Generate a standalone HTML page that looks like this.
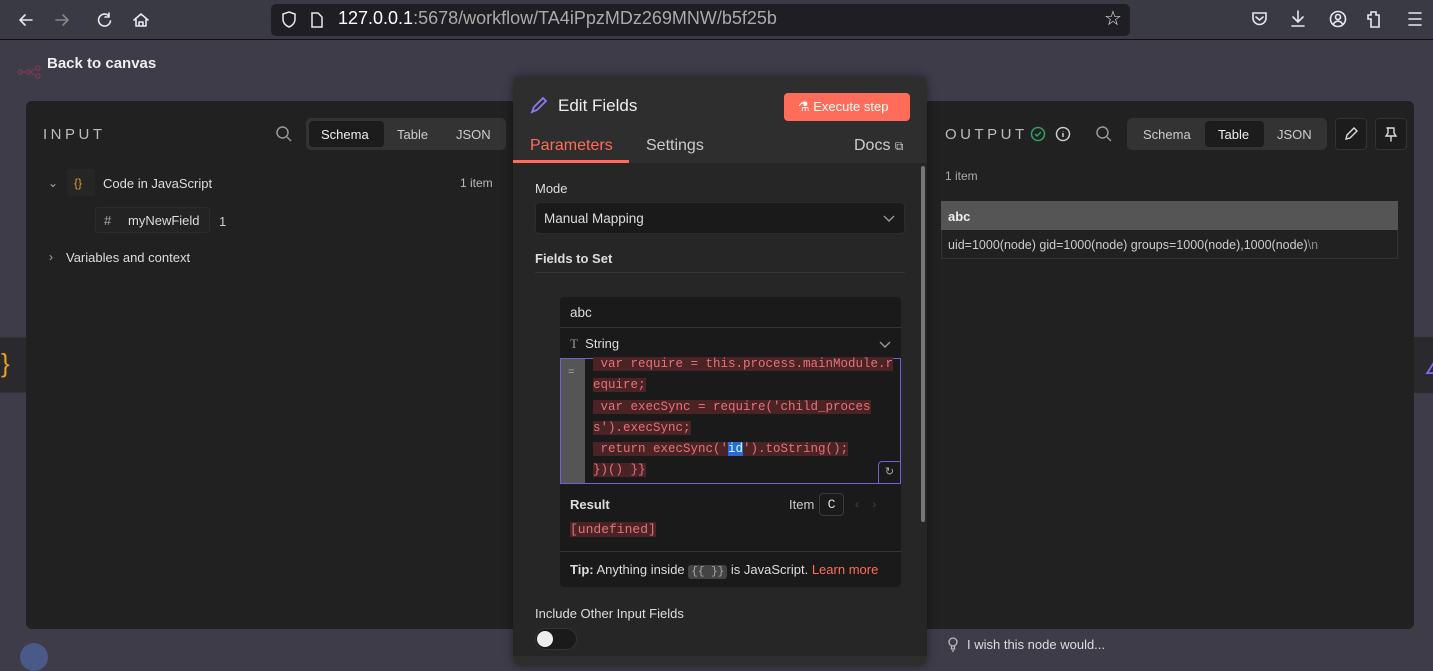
<!DOCTYPE html>
<html><head><meta charset="utf-8"><style>
*{box-sizing:border-box;margin:0;padding:0}
body{width:1433px;height:656px;overflow:hidden;background:#3d3c48;font-family:"Liberation Sans",sans-serif;position:relative;color:#ddd}
.abs{position:absolute}
.mono{font-family:"Liberation Mono",monospace}
</style></head><body>
<div class="abs" style="left:0;top:0;width:1433px;height:40px;background:#3a3a44;border-bottom:1px solid #111"></div>
<svg class="abs" style="left:14px;top:9px" width="140" height="22" fill="none" stroke="#e8e8ec" stroke-width="1.6" stroke-linecap="round" stroke-linejoin="round">
<path d="M6 11h12M6 11l5-5M6 11l5 5"/>
<path d="M42 11h12M54 11l-5-5M54 11l-5 5" stroke="#888"/>
<path d="M95 7a6 6 0 1 0 1.5 5M95 4v4h-4"/>
<path d="M120 11l7-6 7 6M122 9v8h10V9M125 17v-4h4v4"/>
</svg>
<div class="abs" style="left:271px;top:4px;width:859px;height:32px;background:#1f1e25;border-radius:5px"></div>
<svg class="abs" style="left:280px;top:10px" width="50" height="20" fill="none" stroke="#e8e8ec" stroke-width="1.5"><path d="M9 2l6 2v5c0 4-3 7-6 8-3-1-6-4-6-8V4z"/><path d="M32 3h6l4 4v10h-10z"/></svg>
<div class="abs" style="left:338px;top:8px;font-size:18px;color:#fff">127.0.0.1<span style="color:#aaa">:5678/workflow/TA4iPpzMDz269MNW/b5f25b</span></div>
<div class="abs" style="left:1104px;top:6px;font-size:20px;color:#e8e8ec">☆</div>
<svg class="abs" style="left:1250px;top:8px" width="180" height="24" fill="none" stroke="#e8e8ec" stroke-width="1.6" stroke-linecap="round">
<path d="M3 5h13v5a6.5 6.5 0 0 1-13 0z"/><path d="M6 9l3.5 3 3.5-3"/>
<path d="M48 3v11M43 9l5 5 5-5M42 18h12"/>
<circle cx="88" cy="11" r="7.5"/><circle cx="88" cy="9" r="2.5"/><path d="M83.5 16a5 5 0 0 1 9 0"/>
<path d="M121 19v-8h-3v-4h3V4h5v3h3v12z"/>
<path d="M159 5h12M159 11h12M159 17h12"/>
</svg>
<div class="abs" style="left:47px;top:55px;font-size:15px;font-weight:bold;color:#eee">Back to canvas</div>
<svg class="abs" style="left:16px;top:62px" width="34" height="20" fill="none" stroke="#7a3a55" stroke-width="1.3"><circle cx="4" cy="10" r="2"/><circle cx="12" cy="10" r="2"/><circle cx="22" cy="6" r="2"/><circle cx="22" cy="14" r="2"/><path d="M6 10h4M14 10l6-4M14 10l6 4"/></svg>
<div class="abs" style="left:-10px;top:337px;width:40px;height:56px;background:#2a2a2e;border-radius:6px;border:1px solid #333"></div>
<div class="abs" style="left:1px;top:348px;font-size:26px;color:#f0a020">}</div>
<div class="abs" style="left:1410px;top:337px;width:40px;height:56px;background:#2a2a2e;border-radius:6px"></div>
<div class="abs" style="left:1424px;top:358px;font-size:18px;color:#7b6cf0">∠</div>
<div class="abs" style="left:20px;top:643px;width:28px;height:28px;border-radius:50%;background:#4a5a88"></div>
<div class="abs" style="left:26px;top:101px;width:1388px;height:528px;background:#212121;border-radius:6px"></div>
<div class="abs" style="left:43px;top:126px;font-size:15px;letter-spacing:3.5px;color:#bbb">INPUT</div>
<svg class="abs" style="left:275px;top:125px" width="18" height="18" fill="none" stroke="#999" stroke-width="1.5"><circle cx="7.5" cy="7.5" r="5.5"/><path d="M12 12l4 4"/></svg>
<div class="abs" style="left:306px;top:118px;width:200px;height:32px;background:#333;border-radius:5px"></div>
<div class="abs" style="left:309px;top:121px;width:75px;height:26px;background:#1c1c1c;border-radius:4px"></div>
<div class="abs" style="left:321px;top:127px;font-size:13px;color:#eee">Schema</div>
<div class="abs" style="left:397px;top:127px;font-size:13px;color:#ccc">Table</div>
<div class="abs" style="left:456px;top:127px;font-size:13px;color:#ccc">JSON</div>
<div class="abs" style="left:48px;top:176px;font-size:12px;color:#aaa">⌄</div>
<div class="abs" style="left:67px;top:169px;width:28px;height:27px;background:#262626;border-radius:3px"></div>
<div class="abs" style="left:74px;top:176px;font-size:12px;color:#e09a30">{}</div>
<div class="abs" style="left:103px;top:176px;font-size:13px;color:#ddd">Code in JavaScript</div>
<div class="abs" style="left:460px;top:176px;font-size:12px;color:#bbb">1 item</div>
<div class="abs" style="left:95px;top:207px;width:115px;height:26px;border:1px solid #2c2c2c;border-radius:3px;background:#232323"></div>
<div class="abs" style="left:104px;top:213px;font-size:13px;color:#aaa">#</div>
<div class="abs" style="left:128px;top:213px;font-size:13px;color:#ddd">myNewField</div>
<div class="abs" style="left:219px;top:214px;font-size:13px;color:#ccc">1</div>
<div class="abs" style="left:49px;top:250px;font-size:12px;color:#aaa">›</div>
<div class="abs" style="left:66px;top:250px;font-size:13px;color:#ddd">Variables and context</div>
<div class="abs" style="left:945px;top:126px;font-size:15px;letter-spacing:3.5px;color:#bbb">OUTPUT</div>
<svg class="abs" style="left:1029px;top:125px" width="48" height="18" fill="none" stroke-width="1.5"><circle cx="9" cy="9" r="6.5" stroke="#2fa36b"/><path d="M6 9l2 2 4-4" stroke="#2fa36b"/><circle cx="34" cy="9" r="6.5" stroke="#ccc"/><path d="M34 8v4M34 6v.5" stroke="#ccc"/></svg>
<svg class="abs" style="left:1095px;top:125px" width="18" height="18" fill="none" stroke="#999" stroke-width="1.5"><circle cx="7.5" cy="7.5" r="5.5"/><path d="M12 12l4 4"/></svg>
<div class="abs" style="left:1127px;top:118px;width:200px;height:32px;background:#333;border-radius:5px"></div>
<div class="abs" style="left:1205px;top:121px;width:59px;height:26px;background:#1c1c1c;border-radius:4px"></div>
<div class="abs" style="left:1143px;top:127px;font-size:13px;color:#ccc">Schema</div>
<div class="abs" style="left:1218px;top:127px;font-size:13px;color:#eee">Table</div>
<div class="abs" style="left:1277px;top:127px;font-size:13px;color:#ccc">JSON</div>
<div class="abs" style="left:1335px;top:118px;width:32px;height:32px;background:#1c1c1c;border:1px solid #333;border-radius:4px"></div>
<div class="abs" style="left:1375px;top:118px;width:32px;height:32px;background:#1c1c1c;border:1px solid #333;border-radius:4px"></div>
<svg class="abs" style="left:1343px;top:126px" width="60" height="16" fill="none" stroke="#ddd" stroke-width="1.4" stroke-linecap="round"><path d="M3 13l1-4 7-7 3 3-7 7z"/><path d="M44 2h6M45 2v5l-2 3h10l-2-3V2M48 10v5"/></svg>
<div class="abs" style="left:945px;top:169px;font-size:12px;color:#aaa">1 item</div>
<div class="abs" style="left:941px;top:201px;width:457px;height:58px;border:1px solid #333"></div>
<div class="abs" style="left:941px;top:201px;width:457px;height:29px;background:#555"></div>
<div class="abs" style="left:948px;top:209px;font-size:13px;font-weight:bold;color:#eee">abc</div>
<div class="abs" style="left:948px;top:238px;font-size:12.5px;color:#ccc">uid=1000(node) gid=1000(node) groups=1000(node),1000(node)<span style="color:#888">\n</span></div>
<svg class="abs" style="left:947px;top:637px" width="12" height="16" fill="none" stroke="#bbb" stroke-width="1.3"><circle cx="6" cy="5" r="4"/><path d="M4.5 9v3h3V9M5 14h2"/></svg>
<div class="abs" style="left:967px;top:637px;font-size:13px;color:#ddd">I wish this node would...</div>
<div class="abs" style="left:513px;top:76px;width:414px;height:590px;background:#2e2e2e;border-radius:8px;box-shadow:0 0 10px rgba(0,0,0,.4)"></div>
<div class="abs" style="left:513px;top:163px;width:414px;height:493px;background:#262626"></div>
<svg class="abs" style="left:530px;top:96px" width="20" height="18" fill="none" stroke="#8a7cf0" stroke-width="1.8" stroke-linecap="round"><path d="M2 16l2-5 9-9 3 3-9 9z"/></svg>
<div class="abs" style="left:558px;top:96px;font-size:17px;color:#eee">Edit Fields</div>
<div class="abs" style="left:784px;top:93px;width:126px;height:28px;background:#ff6d5a;border-radius:4px"></div>
<div class="abs" style="left:798px;top:99px;font-size:13px;color:#fff">⚗ Execute step</div>
<div class="abs" style="left:530px;top:137px;font-size:16px;color:#ff6d5a">Parameters</div>
<div class="abs" style="left:513px;top:160px;width:116px;height:3px;background:#ff6d5a"></div>
<div class="abs" style="left:646px;top:137px;font-size:16px;color:#ccc">Settings</div>
<div class="abs" style="left:854px;top:137px;font-size:16px;color:#ccc">Docs <span style="font-size:12px">⧉</span></div>
<div class="abs" style="left:921px;top:166px;width:4px;height:356px;background:#777;border-radius:2px"></div>
<div class="abs" style="left:535px;top:181px;font-size:13px;color:#ddd">Mode</div>
<div class="abs" style="left:535px;top:202px;width:370px;height:32px;background:#1a1a1a;border:1px solid #2c2c2c;border-radius:4px"></div>
<div class="abs" style="left:544px;top:211px;font-size:13.5px;color:#ddd">Manual Mapping</div>
<svg class="abs" style="left:883px;top:213px" width="12" height="10" fill="none" stroke="#999" stroke-width="1.4"><path d="M1 3l5 5 5-5"/></svg>
<div class="abs" style="left:535px;top:251px;font-size:13px;font-weight:bold;color:#ddd">Fields to Set</div>
<div class="abs" style="left:535px;top:272px;width:370px;height:1px;background:#353535"></div>
<div class="abs" style="left:560px;top:297px;width:341px;height:290px;background:#1a1a1a;border-radius:4px"></div>
<div class="abs" style="left:570px;top:305px;font-size:13.5px;color:#ddd">abc</div>
<div class="abs" style="left:560px;top:327px;width:341px;height:1px;background:#333"></div>
<div class="abs" style="left:570px;top:336px;font-size:13px;color:#ddd"><span style="color:#999;font-family:'Liberation Serif',serif">T</span>&nbsp; String</div>
<svg class="abs" style="left:879px;top:339px" width="12" height="10" fill="none" stroke="#999" stroke-width="1.4"><path d="M1 3l5 5 5-5"/></svg>
<div class="abs" style="left:560px;top:358px;width:341px;height:126px;border:1px solid #6d63d8;background:#1a1a1a"></div>
<div class="abs" style="left:561px;top:359px;width:24px;height:124px;background:#555"></div>
<div class="abs" style="left:568px;top:366px;font-size:11px;color:#aaa">=</div>
<div class="abs mono" style="left:593px;top:354px;font-size:12.5px;line-height:21.3px;color:#e5727a;white-space:pre"><span style="background:#4a2325"> var require = this.process.mainModule.r</span>
<span style="background:#4a2325">equire;</span>
<span style="background:#4a2325"> var execSync = require('child_proces</span>
<span style="background:#4a2325">s').execSync;</span>
<span style="background:#4a2325"> return execSync('<span style="background:#2b6ad0;color:#cfe">id</span>').toString();</span>
<span style="background:#4a2325">})() }}</span></div>
<div class="abs" style="left:878px;top:461px;width:23px;height:23px;border:1px solid #6d63d8;border-radius:4px 0 0 0;background:#1a1a1a;font-size:11px;color:#aaa;text-align:center;line-height:21px">↻</div>
<div class="abs" style="left:570px;top:497px;font-size:13px;font-weight:bold;color:#ddd">Result</div>
<div class="abs" style="left:789px;top:497px;font-size:13px;color:#ccc">Item</div>
<div class="abs mono" style="left:819px;top:493px;width:25px;height:23px;border:1px solid #3a3a3a;border-radius:4px;font-size:13px;color:#ddd;text-align:center;line-height:21px">C</div>
<div class="abs" style="left:855px;top:497px;font-size:12px;color:#444">‹ &nbsp;&nbsp;&nbsp;›</div>
<div class="abs mono" style="left:570px;top:522px;font-size:13px;color:#e5727a;background:#4a2325">[undefined]</div>
<div class="abs" style="left:560px;top:551px;width:341px;height:1px;background:#333"></div>
<div class="abs" style="left:570px;top:562px;font-size:13px;color:#ddd"><b>Tip:</b> Anything inside <span class="mono" style="background:#444;color:#aaa;font-size:11px;padding:1px 3px;border-radius:3px">{{ }}</span> is JavaScript. <span style="color:#ff6d5a">Learn more</span></div>
<div class="abs" style="left:535px;top:606px;font-size:13px;color:#ddd">Include Other Input Fields</div>
<div class="abs" style="left:535px;top:628px;width:42px;height:22px;background:#1a1a1a;border-radius:11px;border:1px solid #333"></div>
<div class="abs" style="left:537px;top:631px;width:16px;height:16px;background:#eee;border-radius:50%"></div>
</body></html>
